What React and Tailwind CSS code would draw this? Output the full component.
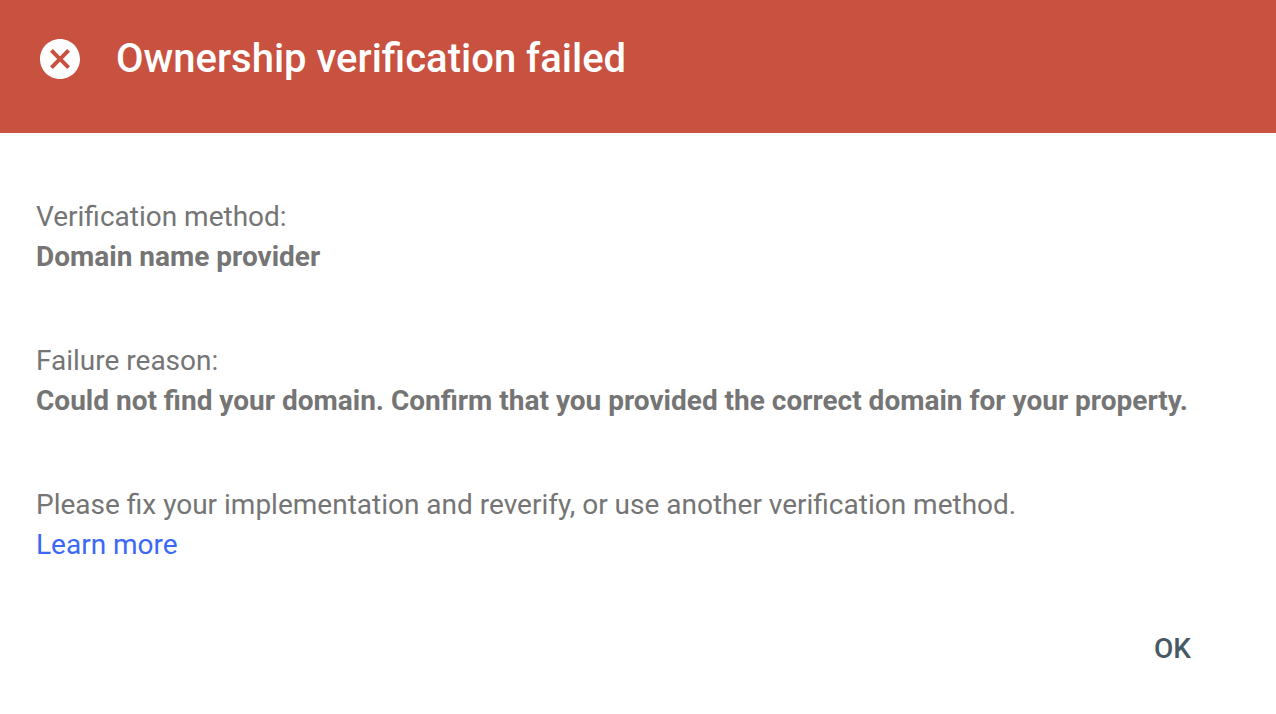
import React from 'react';
import { MdCancel } from 'react-icons/md';

const App = () => {
  return (
    <div className="flex h-screen flex-col overflow-hidden bg-white font-[Roboto,sans-serif] antialiased">
      {/* Header */}
      <header className="flex h-[133px] shrink-0 items-start gap-8 bg-[#c95140] px-9 pt-[35px] text-white">
        <MdCancel size={48} />
        <h1 className="text-[40px] leading-[48px] font-medium">Ownership verification failed</h1>
      </header>

      {/* Details */}
      <main className="flex flex-col gap-16 px-9 pt-16 text-[28px] leading-10 whitespace-nowrap text-[#757575]">
        <div>
          <p>Verification method:</p>
          <p className="font-bold">Domain name provider</p>
        </div>
        <div>
          <p>Failure reason:</p>
          <p className="font-bold">
            Could not find your domain. Confirm that you provided the correct domain for your property.
          </p>
        </div>
        <div>
          <p>Please fix your implementation and reverify, or use another verification method.</p>
          <a href="#" className="text-[#3b68f7]">Learn more</a>
        </div>
      </main>

      {/* Actions */}
      <footer className="flex justify-end pt-16 pr-[85px]">
        <button className="text-[28px] leading-10 font-medium text-[#455a64]">OK</button>
      </footer>
    </div>
  );
};

export default App;
